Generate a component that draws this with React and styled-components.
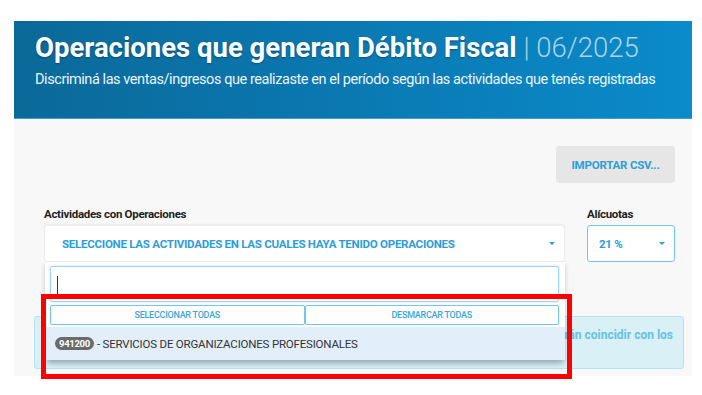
import React from 'react'
import styled, { createGlobalStyle } from 'styled-components'

const GlobalStyle = createGlobalStyle`
  body {
    margin: 0;
    background: #ffffff;
    font-family: Roboto, "Liberation Sans", sans-serif;
  }
`

const Page = styled.div`
  position: relative;
  width: 702px;
  height: 395px;
  padding: 21px 10px 0 14px;
  box-sizing: border-box;
`

const Panel = styled.div`
  display: flex;
  flex-direction: column;
`

const Header = styled.header`
  height: 98px;
  box-sizing: border-box;
  padding: 9px 0 0 21px;
  background: linear-gradient(90deg, #0b6999 0%, #0a79b2 50%, #0a8bca 100%);
  border-bottom: 1px solid #3f9fd2;
`

const Title = styled.h1`
  margin: 0;
  font-size: 27.5px;
  line-height: 35px;
  font-weight: 700;
  color: #ffffff;
  letter-spacing: 0;
  text-shadow: 0 1px 2px rgba(0, 0, 0, 0.35);
`

const Period = styled.span`
  font-weight: 300;
  color: rgba(225, 238, 246, 0.75);
  text-shadow: none;
`

const Subtitle = styled.p`
  margin: 5px 0 0;
  font-size: 14.5px;
  line-height: 20px;
  font-weight: 400;
  color: #eaf4fa;
  letter-spacing: -0.43px;
`

const Body = styled.section`
  position: relative;
  height: 257px;
  background: #f8f8f8;
  padding: 27px 17px 0 30px;
  box-sizing: border-box;
`

const Toolbar = styled.div`
  display: flex;
  justify-content: flex-end;
`

const GrayButton = styled.button`
  width: 119px;
  height: 37px;
  border: none;
  border-radius: 3px;
  background: #e6e6e6;
  color: #2a9edb;
  font-family: Roboto, sans-serif;
  font-weight: 700;
  font-size: 11.5px;
  letter-spacing: -0.2px;
`

const FormRow = styled.div`
  display: grid;
  grid-template-columns: 521px 88px;
  column-gap: 22px;
  margin-top: 24px;
`

const Field = styled.div`
  position: relative;
  display: flex;
  flex-direction: column;
`

const Label = styled.label`
  font-size: 11.5px;
  font-weight: 700;
  color: #1d1d1d;
  line-height: 14px;
  margin-bottom: 4px;
  letter-spacing: -0.3px;
`

const SelectBox = styled.div`
  height: 37px;
  box-sizing: border-box;
  display: flex;
  align-items: center;
  justify-content: space-between;
  padding: 0 9px 0 ${(p) => (p.$compact ? 11 : 17)}px;
  background: #ffffff;
  border: 1px solid ${(p) => (p.$compact ? '#74c7f0' : '#ececec')};
  border-radius: 3px;
  box-shadow: ${(p) => (p.$compact ? 'none' : '0 -1px 2px rgba(0,0,0,0.06)')};
  color: #2a9edb;
  font-size: 11.5px;
  font-weight: 700;
  letter-spacing: -0.25px;
`

const Caret = styled.span`
  width: 0;
  height: 0;
  border-left: 3px solid transparent;
  border-right: 3px solid transparent;
  border-top: 3px solid #2a9edb;
`

const Alert = styled.div`
  margin: 54px -9px 0 -10px;
  height: 53px;
  box-sizing: border-box;
  padding: 10px 10px 9px 11px;
  background: #d9f0f7;
  border: 1px solid #b6e1ef;
  border-radius: 3px;
  color: #64c2e2;
  font-size: 12px;
  font-weight: 700;
  line-height: 17px;
`

const AlertLine = styled.div`
  text-align: ${(p) => p.$align || 'left'};
  white-space: nowrap;
  overflow: hidden;
`

const Dropdown = styled.div`
  position: absolute;
  top: 55px;
  left: 1px;
  width: 520px;
  background: #ffffff;
  box-shadow: 0 3px 5px rgba(0, 0, 0, 0.18), 0 8px 6px -4px rgba(90, 110, 120, 0.25);
  padding: 4px 6px 0 5px;
  box-sizing: border-box;
  z-index: 2;
`

const SearchInput = styled.div`
  height: 36px;
  box-sizing: border-box;
  border: 1px solid #9fd2f3;
  border-radius: 3px;
  box-shadow: 0 0 2px rgba(102, 175, 233, 0.5);
  padding: 9px 6px;
`

const Cursor = styled.span`
  display: block;
  width: 1px;
  height: 19px;
  background: #333333;
`

const ActionRow = styled.div`
  display: grid;
  grid-template-columns: 1fr 1fr;
  margin-top: 3px;
`

const ActionButton = styled.button`
  height: 20px;
  border: 1px solid #6fc6f0;
  border-radius: 2px;
  background: #ffffff;
  color: #3aa6dc;
  font-family: Roboto, sans-serif;
  font-size: 9px;
  font-weight: 500;
  letter-spacing: -0.25px;
  padding: 0;
`

const Option = styled.div`
  display: flex;
  align-items: center;
  gap: 3px;
  height: 33px;
  margin: 2px -6px 0 -5px;
  padding-left: 10px;
  background: #e2eefa;
  color: #333333;
  font-size: 11.5px;
  letter-spacing: -0.2px;
`

const Badge = styled.span`
  display: inline-block;
  padding: 0 4px;
  height: 13px;
  line-height: 13px;
  border-radius: 7px;
  background: #6b6b6b;
  color: #ffffff;
  font-size: 9.5px;
  font-weight: 700;
  letter-spacing: -0.3px;
`

const Highlight = styled.div`
  position: absolute;
  left: 41px;
  top: 294px;
  width: 531px;
  height: 85px;
  box-sizing: border-box;
  border: 5px solid #ff0000;
  z-index: 5;
  pointer-events: none;
`

export default function App() {
  return (
    <Page>
      <GlobalStyle />
      <Panel>
        <Header>
          <Title>
            Operaciones que generan Débito Fiscal <Period>| 06/2025</Period>
          </Title>
          <Subtitle>
            Discriminá las ventas/ingresos que realizaste en el período según las actividades que tenés registradas
          </Subtitle>
        </Header>
        <Body>
          <Toolbar>
            <GrayButton>IMPORTAR CSV...</GrayButton>
          </Toolbar>
          <FormRow>
            <Field>
              <Label>Actividades con Operaciones</Label>
              <SelectBox>
                SELECCIONE LAS ACTIVIDADES EN LAS CUALES HAYA TENIDO OPERACIONES
                <Caret />
              </SelectBox>
              <Dropdown>
                <SearchInput>
                  <Cursor />
                </SearchInput>
                <ActionRow>
                  <ActionButton>SELECCIONAR TODAS</ActionButton>
                  <ActionButton>DESMARCAR TODAS</ActionButton>
                </ActionRow>
                <Option>
                  <Badge>941200</Badge>- SERVICIOS DE ORGANIZACIONES PROFESIONALES
                </Option>
              </Dropdown>
            </Field>
            <Field>
              <Label>Alícuotas</Label>
              <SelectBox $compact>
                21 %
                <Caret />
              </SelectBox>
            </Field>
          </FormRow>
          <Alert>
            <AlertLine $align="right">
              Los importes que informes por actividad y alícuota deberán coincidir con los
            </AlertLine>
            <AlertLine>comprobantes emitidos en el período.</AlertLine>
          </Alert>
        </Body>
      </Panel>
      <Highlight />
    </Page>
  )
}
